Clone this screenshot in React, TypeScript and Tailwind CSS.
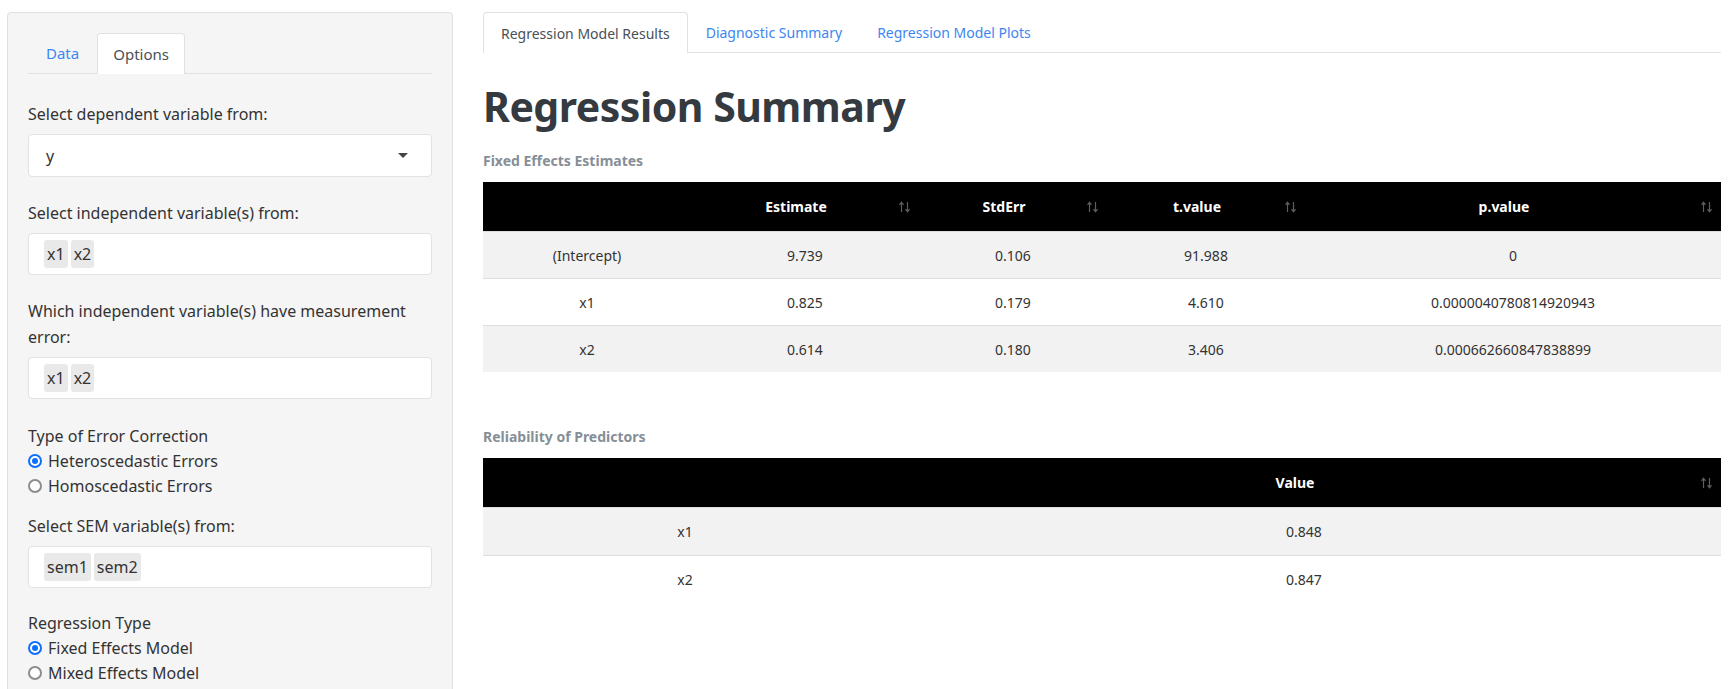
const fixedRows = [
  { name: '(Intercept)', est: '9.739', se: '0.106', t: '91.988', p: '0' },
  { name: 'x1', est: '0.825', se: '0.179', t: '4.610', p: '0.0000040780814920943' },
  { name: 'x2', est: '0.614', se: '0.180', t: '3.406', p: '0.000662660847838899' },
]

const reliability = [
  { name: 'x1', value: '0.848' },
  { name: 'x2', value: '0.847' },
]

function SortIcon() {
  return (
    <svg width="13" height="12" viewBox="0 0 13 12" className="ml-[7px] shrink-0" fill="none" stroke="#5e5e5e" strokeWidth="1.2">
      <path d="M3.5 11V1.5M1.5 3.8L3.5 1.3L5.5 3.8" />
      <path d="M9.5 1V10.5M7.5 8.2L9.5 10.7L11.5 8.2" />
    </svg>
  )
}

function HeadCell({ label, sortable = true }: { label?: string; sortable?: boolean }) {
  return (
    <div className="flex items-center pl-[10px] pr-[8px]">
      <span className="flex-1 text-center font-bold text-white">{label}</span>
      {sortable ? <SortIcon /> : <span className="w-[13px] ml-[7px]" />}
    </div>
  )
}

function Chip({ text }: { text: string }) {
  return <span className="h-[28px] px-[3px] flex items-center rounded-[3px] bg-[#e9e9e9] text-[#333]">{text}</span>
}

function ChipInput({ items }: { items: string[] }) {
  return (
    <div className="h-[42px] bg-white border border-[#e2e2e2] rounded-[4px] flex items-center gap-[3px] pl-[15px]">
      {items.map(i => <Chip key={i} text={i} />)}
    </div>
  )
}

function Radio({ label, checked }: { label: string; checked?: boolean }) {
  return (
    <div className="flex items-center h-[25px]">
      {checked ? (
        <span className="w-[14px] h-[14px] rounded-full bg-[#0d6efd] flex items-center justify-center">
          <span className="w-[10px] h-[10px] rounded-full bg-white flex items-center justify-center">
            <span className="w-[6px] h-[6px] rounded-full bg-[#0d6efd]" />
          </span>
        </span>
      ) : (
        <span className="w-[14px] h-[14px] rounded-full border-2 border-[#8c8c8c] bg-white" />
      )}
      <span className="ml-[6px]">{label}</span>
    </div>
  )
}

function Sidebar() {
  return (
    <div className="w-[446px] shrink-0 mt-[12px] bg-[#f5f5f5] border border-[#e0e0e0] rounded-[4px] px-[20px] pt-[20px] pb-[24px] text-[16px] text-[#333]">
      <div className="flex border-b border-[#dee2e6] h-[41px] text-[15px]">
        <div className="px-[18px] flex items-center text-[#3d86f2]">Data</div>
        <div className="px-[15px] flex items-center bg-white border border-[#dee2e6] border-b-0 rounded-t-[4px] text-[#495057] -mb-px">Options</div>
      </div>

      <div className="mt-[27px] leading-[26px]">Select dependent variable from:</div>
      <div className="mt-[7px] h-[43px] bg-white border border-[#e2e2e2] rounded-[4px] flex items-center pl-[17px] pr-[23px]">
        <span className="flex-1">y</span>
        <span className="w-0 h-0 border-l-[5px] border-r-[5px] border-t-[5px] border-l-transparent border-r-transparent border-t-[#444]" />
      </div>

      <div className="mt-[23px] leading-[26px]">Select independent variable(s) from:</div>
      <div className="mt-[7px]"><ChipInput items={['x1', 'x2']} /></div>

      <div className="mt-[23px] leading-[26px]">Which independent variable(s) have measurement error:</div>
      <div className="mt-[7px]"><ChipInput items={['x1', 'x2']} /></div>

      <div className="mt-[25px] leading-[24px]">Type of Error Correction</div>
      <Radio label="Heteroscedastic Errors" checked />
      <Radio label="Homoscedastic Errors" />

      <div className="mt-[15px] leading-[26px]">Select SEM variable(s) from:</div>
      <div className="mt-[7px]"><ChipInput items={['sem1', 'sem2']} /></div>

      <div className="mt-[23px] leading-[24px]">Regression Type</div>
      <Radio label="Fixed Effects Model" checked />
      <Radio label="Mixed Effects Model" />
    </div>
  )
}

function Main() {
  const fixedCols = 'grid grid-cols-[208px_228px_188px_198px_1fr]'
  const relCols = 'grid grid-cols-[404px_1fr]'
  return (
    <div className="flex-1 ml-[30px] mt-[12px] text-[14px] text-[#333]">
      <div className="flex border-b border-[#dee2e6] h-[41px] text-[14px]">
        <div className="px-[17px] flex items-center bg-white border border-[#dee2e6] border-b-0 rounded-t-[4px] text-[#495057] -mb-px">Regression Model Results</div>
        <div className="px-[18px] flex items-center text-[#3d86f2]">Diagnostic Summary</div>
        <div className="px-[17px] flex items-center text-[#3d86f2]">Regression Model Plots</div>
      </div>

      <h1 className="mt-[25px] text-[41px] leading-[56px] font-bold text-[#343a40] tracking-[-0.5px]">Regression Summary</h1>

      <div className="mt-[17px] font-bold text-[#868e96] text-[14px] leading-[20px]">Fixed Effects Estimates</div>

      <div className="mt-[11px]">
        <div className={`${fixedCols} h-[49px] bg-black`}>
          <HeadCell sortable={false} />
          <HeadCell label="Estimate" />
          <HeadCell label="StdErr" />
          <HeadCell label="t.value" />
          <HeadCell label="p.value" />
        </div>
        {fixedRows.map((r, i) => (
          <div key={r.name} className={`${fixedCols} h-[47px] border-t border-[#dddddd] items-center text-center ${i % 2 === 0 ? 'bg-[#f2f2f2]' : 'bg-white'}`}>
            <span>{r.name}</span>
            <span>{r.est}</span>
            <span>{r.se}</span>
            <span>{r.t}</span>
            <span>{r.p}</span>
          </div>
        ))}
      </div>

      <div className="mt-[55px] font-bold text-[#868e96] text-[14px] leading-[20px]">Reliability of Predictors</div>

      <div className="mt-[11px]">
        <div className={`${relCols} h-[49px] bg-black`}>
          <HeadCell sortable={false} />
          <HeadCell label="Value" />
        </div>
        {reliability.map((r, i) => (
          <div key={r.name} className={`${relCols} h-[48px] border-t border-[#dddddd] items-center text-center ${i % 2 === 0 ? 'bg-[#f2f2f2]' : 'bg-white'}`}>
            <span>{r.name}</span>
            <span>{r.value}</span>
          </div>
        ))}
      </div>
    </div>
  )
}

export default function App() {
  return (
    <div className="min-h-screen bg-white flex pl-[7px] pr-[14px] font-['Noto_Sans',sans-serif]">
      <Sidebar />
      <Main />
    </div>
  )
}
